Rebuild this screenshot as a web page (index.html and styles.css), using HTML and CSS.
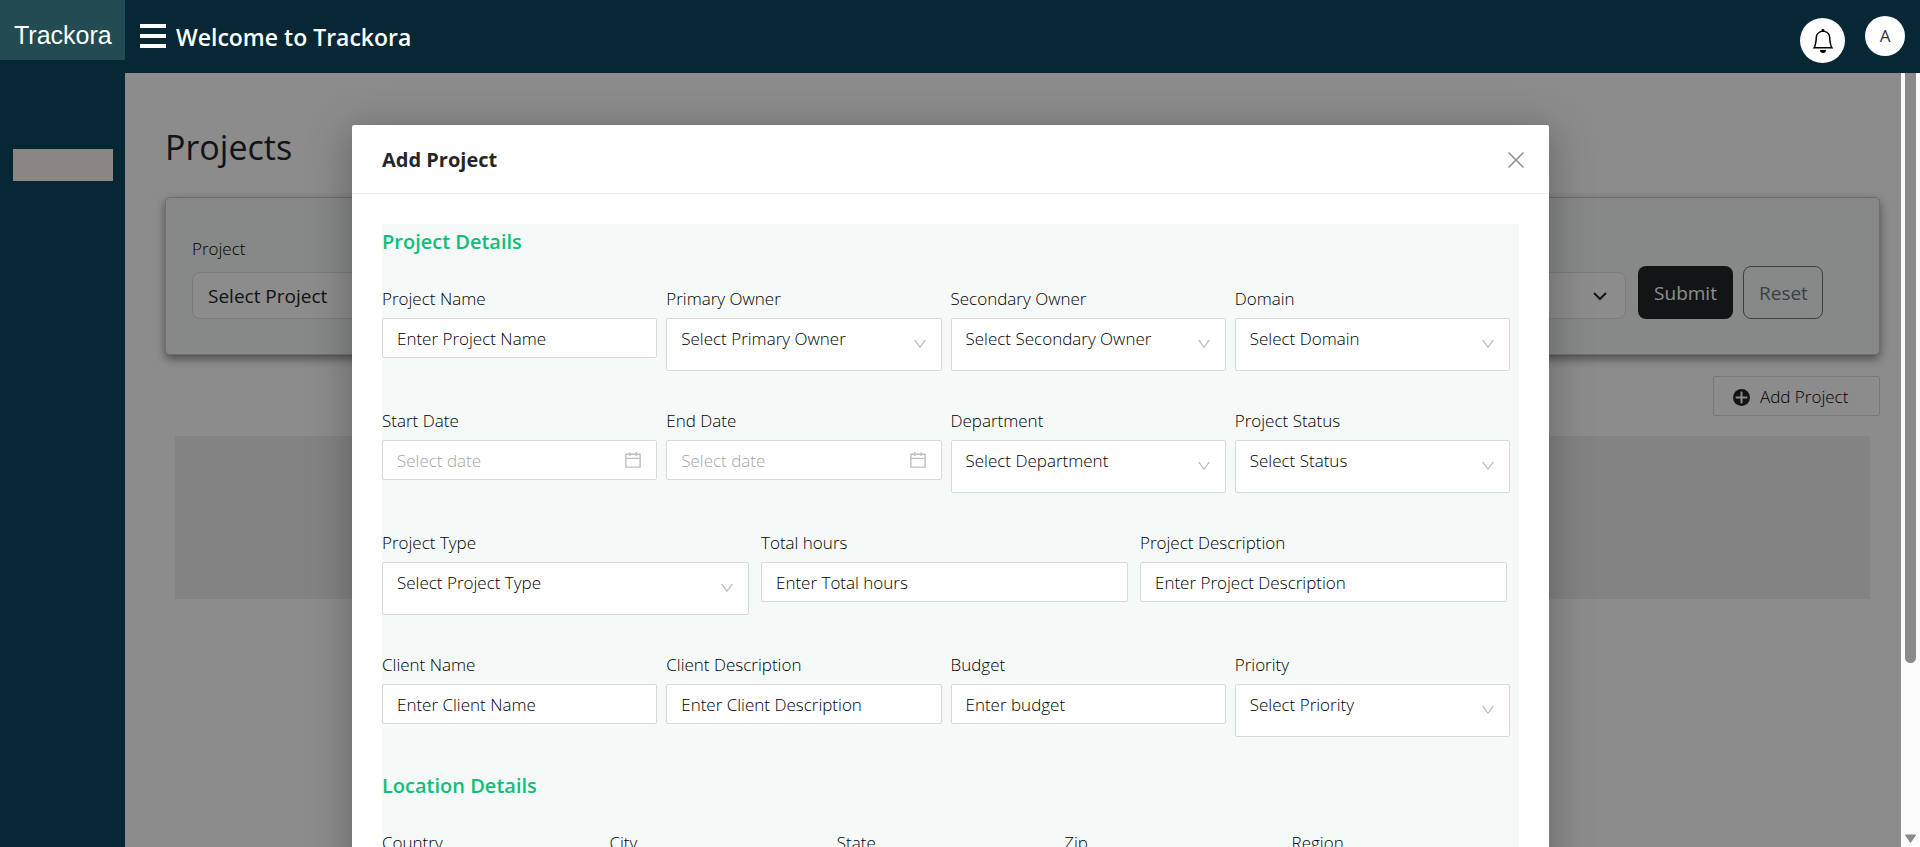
FILE: index.html
```html
<!DOCTYPE html>
<html lang="en">
<head>
<meta charset="utf-8">
<title>Trackora</title>
<link rel="stylesheet" href="styles.css">
</head>
<body>
<svg width="0" height="0" class="sprite" aria-hidden="true">
  <symbol id="down" viewBox="0 0 1024 1024"><path d="M884 256h-75c-5.1 0-9.9 2.5-12.9 6.6L512 654.2 227.9 262.6c-3-4.1-7.8-6.6-12.9-6.6h-75c-6.5 0-10.3 7.4-6.5 12.7l352.6 486.1c12.8 17.6 39 17.6 51.7 0l352.6-486.1c3.9-5.3.1-12.7-6.4-12.7z"/></symbol>
  <symbol id="calendar" viewBox="0 0 1024 1024"><path d="M880 184H712v-64c0-4.4-3.6-8-8-8h-56c-4.4 0-8 3.6-8 8v64H384v-64c0-4.4-3.6-8-8-8h-56c-4.4 0-8 3.6-8 8v64H144c-17.7 0-32 14.3-32 32v664c0 17.7 14.3 32 32 32h736c17.7 0 32-14.3 32-32V216c0-17.7-14.3-32-32-32zm-40 656H184V460h656v380zM184 392V256h128v48c0 4.4 3.6 8 8 8h56c4.4 0 8-3.6 8-8v-48h256v48c0 4.4 3.6 8 8 8h56c4.4 0 8-3.6 8-8v-48h128v136H184z"/></symbol>
</svg>
<div class="app">
  <nav class="sidebar">
    <a class="brand" href="#">Trackora</a>
    <a class="side-item" href="#" aria-label="Menu item"></a>
  </nav>
  <header class="topbar">
    <button class="burger" aria-label="Toggle menu"><span></span><span></span><span></span></button>
    <span class="welcome">Welcome to Trackora</span>
    <button class="bell" aria-label="Notifications">
      <svg width="24" height="24" viewBox="0 0 16 16"><path d="M8 16a2 2 0 0 0 2-2H6a2 2 0 0 0 2 2M8 1.918l-.797.161A4 4 0 0 0 4 6c0 .628-.134 2.197-.459 3.742-.16.767-.376 1.566-.663 2.258h10.244c-.287-.692-.502-1.49-.663-2.258C12.134 8.197 12 6.628 12 6a4 4 0 0 0-3.203-3.92zM14.22 12c.223.447.481.801.78 1H1c.299-.199.557-.553.78-1C2.68 10.2 3 6.88 3 6c0-2.42 1.72-4.44 4.005-4.901a1 1 0 1 1 1.99 0A5 5 0 0 1 13 6c0 .88.32 4.2 1.22 6"/></svg>
    </button>
    <button class="avatar">A</button>
  </header>
  <div class="stage">
    <main class="page">
      <h1 class="page-title">Projects</h1>
      <section class="filters">
        <div class="filter">
          <label for="f-project">Project</label>
          <div class="filter-select">
            <select id="f-project"><option>Select Project</option></select>
            <svg width="16" height="16" viewBox="0 0 16 16"><path d="m2 5 6 6 6-6"/></svg>
          </div>
        </div>
        <button class="submit">Submit</button>
        <button class="reset">Reset</button>
      </section>
      <button class="add">
        <svg width="17" height="17" viewBox="0 0 17 17"><circle cx="8.500" cy="8.500" r="8.500" fill="#212529"/><path d="M8.500 3.500v10M3.500 8.500h10" stroke="#fff" stroke-width="2" stroke-linecap="round"/></svg>
        Add Project
      </button>
      <div class="table-box"></div>
    </main>
    <div class="mask">
      <div class="modal" role="dialog" aria-labelledby="modal-title">
        <div class="modal-head">
          <h2 id="modal-title">Add Project</h2>
          <button class="close" aria-label="Close"><svg width="16" height="16" viewBox="0 0 16 16"><path d="M0.5 0.5l15 15M15.5 0.5l-15 15"/></svg></button>
        </div>
        <form class="panel">
          <h3>Project Details</h3>
          <div class="row four">
            <div class="field"><label for="a1">Project Name</label><input id="a1" placeholder="Enter Project Name"></div>
            <div class="field"><label for="a2">Primary Owner</label><div class="pick"><select id="a2"><option>Select Primary Owner</option></select><svg><use href="#down"/></svg></div></div>
            <div class="field"><label for="a3">Secondary Owner</label><div class="pick"><select id="a3"><option>Select Secondary Owner</option></select><svg><use href="#down"/></svg></div></div>
            <div class="field"><label for="a4">Domain</label><div class="pick"><select id="a4"><option>Select Domain</option></select><svg><use href="#down"/></svg></div></div>
          </div>
          <div class="row four">
            <div class="field"><label for="b1">Start Date</label><div class="date"><input id="b1" placeholder="Select date"><svg><use href="#calendar"/></svg></div></div>
            <div class="field"><label for="b2">End Date</label><div class="date"><input id="b2" placeholder="Select date"><svg><use href="#calendar"/></svg></div></div>
            <div class="field"><label for="b3">Department</label><div class="pick"><select id="b3"><option>Select Department</option></select><svg><use href="#down"/></svg></div></div>
            <div class="field"><label for="b4">Project Status</label><div class="pick"><select id="b4"><option>Select Status</option></select><svg><use href="#down"/></svg></div></div>
          </div>
          <div class="row three">
            <div class="field"><label for="c1">Project Type</label><div class="pick"><select id="c1"><option>Select Project Type</option></select><svg><use href="#down"/></svg></div></div>
            <div class="field"><label for="c2">Total hours</label><input id="c2" placeholder="Enter Total hours"></div>
            <div class="field"><label for="c3">Project Description</label><input id="c3" placeholder="Enter Project Description"></div>
          </div>
          <div class="row four last">
            <div class="field"><label for="d1">Client Name</label><input id="d1" placeholder="Enter Client Name"></div>
            <div class="field"><label for="d2">Client Description</label><input id="d2" placeholder="Enter Client Description"></div>
            <div class="field"><label for="d3">Budget</label><input id="d3" placeholder="Enter budget"></div>
            <div class="field"><label for="d4">Priority</label><div class="pick"><select id="d4"><option>Select Priority</option></select><svg><use href="#down"/></svg></div></div>
          </div>
          <h3>Location Details</h3>
          <div class="row five">
            <div class="field"><label for="e1">Country</label><input id="e1"></div>
            <div class="field"><label for="e2">City</label><input id="e2"></div>
            <div class="field"><label for="e3">State</label><input id="e3"></div>
            <div class="field"><label for="e4">Zip</label><input id="e4"></div>
            <div class="field"><label for="e5">Region</label><input id="e5"></div>
          </div>
        </form>
      </div>
    </div>
  </div>
  <div class="scrollbar">
    <div class="thumb"></div>
    <svg width="13" height="10" viewBox="0 0 13 10"><path d="M1.5 1h10L6.500 8.500z"/></svg>
  </div>
</div>
</body>
</html>
```
FILE: styles.css
```css
* { box-sizing: border-box; }
body {
  margin: 0;
  font-family: "Open Sans", "Noto Sans", sans-serif;
  font-size: 17px;
  font-weight: 300;
  line-height: 24px;
  color: #000;
  background: #fff;
  overflow: hidden;
}
button, input, select { font: inherit; color: inherit; margin: 0; }
h1, h2, h3 { margin: 0; }
.sprite { position: absolute; }

.app {
  display: grid;
  grid-template-columns: 125px 1fr 19px;
  grid-template-rows: 73px 1fr;
  height: 100vh;
}
.sidebar { grid-row: 1 / 3; background: #062733; }
.brand {
  display: block;
  height: 60px;
  padding-left: 14px;
  background: #224c52;
  color: #fff;
  font: 25px/70px "Liberation Sans", Arial, sans-serif;
  text-decoration: none;
}
.side-item { display: block; height: 32px; margin: 89px 12px 0 13px; background: #8b8684; }

.topbar {
  grid-column: 2 / 4;
  display: flex;
  align-items: flex-start;
  background: #062733;
  padding: 0 15px;
}
.burger {
  display: grid;
  gap: 6px;
  width: 26px;
  margin-top: 24px;
  padding: 0;
  border: 0;
  background: none;
}
.burger span { height: 4px; background: #fff; }
.welcome { margin: 21px auto 0 10px; font-size: 23px; line-height: 32px; font-weight: 600; color: #fff; }
.bell, .avatar {
  display: grid;
  place-items: center;
  padding: 0;
  border: 0;
  border-radius: 50%;
  background: #fff;
}
.bell { width: 45px; height: 45px; margin: 18px 20px 0 0; }
.avatar { width: 40px; height: 40px; margin-top: 16px; font-weight: 400; color: #333; }

.stage { position: relative; overflow: hidden; }
.page { display: flex; flex-direction: column; padding: 50px 21px 0 40px; }
.page-title { font-size: 34px; line-height: 48px; font-weight: 500; color: #212529; }
.filters {
  display: flex;
  align-items: flex-end;
  height: 158px;
  margin-top: 26px;
  padding: 0 56px 35px 26px;
  border: 1px solid #c4cac8;
  border-radius: 5px;
  background: #f5f9f8;
  box-shadow: 0 4px 10px rgba(0, 0, 0, .45);
}
.filter { flex: 1; margin-right: 12px; }
.filter label { display: block; margin-bottom: 11px; }
.filter-select { position: relative; }
.filter-select select {
  display: block;
  appearance: none;
  width: 100%;
  height: 47px;
  padding: 0 15px;
  border: 1px solid #dee2e6;
  border-radius: 8px;
  background: #fff;
  font-size: 19px;
  font-weight: 400;
  color: #212529;
}
.filter-select svg { position: absolute; right: 18px; top: 16px; fill: none; stroke: #212529; stroke-width: 2; }
.submit, .reset { height: 53px; border-radius: 8px; font-size: 19px; font-weight: 400; padding: 0 15px; }
.submit { width: 95px; margin-right: 10px; border: 0; background: #212529; color: #fff; }
.reset { width: 80px; border: 1px solid #6c757d; background: none; color: #6c757d; }
.add {
  display: flex;
  align-items: center;
  align-self: flex-end;
  gap: 10px;
  width: 167px;
  height: 40px;
  margin-top: 21px;
  padding: 2px 19px 0;
  border: 1px solid #d9d9d9;
  border-radius: 2px;
  background: #fff;
}
.table-box { height: 163px; margin: 20px 10px 0; background: #eee; }

.mask {
  position: absolute;
  inset: 0;
  background: rgba(0, 0, 0, .45);
  padding: 52px 352px 0 227px;
}
.modal { background: #fff; border-radius: 2px; box-shadow: 0 8px 40px 4px rgba(0, 0, 0, .25); }
.modal-head {
  display: flex;
  justify-content: space-between;
  align-items: center;
  height: 69px;
  padding: 2px 25px 0 30px;
  border-bottom: 1px solid #f0f0f0;
}
.modal-head h2 { font-size: 20px; line-height: 28px; font-weight: 700; color: #262626; }
.close { display: grid; padding: 0; border: 0; background: none; }
.close svg { stroke: #8c8c8c; stroke-width: 1.5; }
.panel { margin: 30px 30px 0; background: #f5f9f8; }
.panel h3 { padding: 2px 0 27px; font-size: 20px; line-height: 32px; font-weight: 600; color: #0fbf78; }
.row { display: grid; margin-bottom: 36px; }
.row.last { margin-bottom: 31px; }
.four { grid-template-columns: repeat(4, 1fr); }
.three { grid-template-columns: repeat(3, 1fr); }
.five { grid-template-columns: repeat(5, 1fr); }
.field { padding: 2px 9px 0 0; }
.three .field { padding-right: 12px; }
.field label { display: block; margin-bottom: 7px; }
.field input, .field select {
  display: block;
  appearance: none;
  width: 100%;
  height: 40px;
  padding: 0 14px;
  border: 1px solid #d9d9d9;
  border-radius: 2px;
  background: #fff;
}
.field input::placeholder { color: #000; opacity: 1; }
.field .date input::placeholder { color: #a6a6a6; }
.field select { height: 53px; padding-bottom: 12px; }
.pick, .date { position: relative; }
.pick svg { position: absolute; right: 14px; top: 18px; width: 16px; height: 16px; fill: #bfbfbf; }
.date svg { position: absolute; right: 14px; top: 10px; width: 20px; height: 20px; fill: #bfbfbf; }

.scrollbar {
  display: flex;
  flex-direction: column;
  justify-content: space-between;
  align-items: center;
  padding-bottom: 3px;
  background: #fcfcfc;
}
.scrollbar svg { fill: #8b8b8b; stroke: #8b8b8b; stroke-linejoin: round; }
.thumb { width: 11px; height: 590px; border-radius: 0 0 6px 6px; background: #8b8b8b; }
```
